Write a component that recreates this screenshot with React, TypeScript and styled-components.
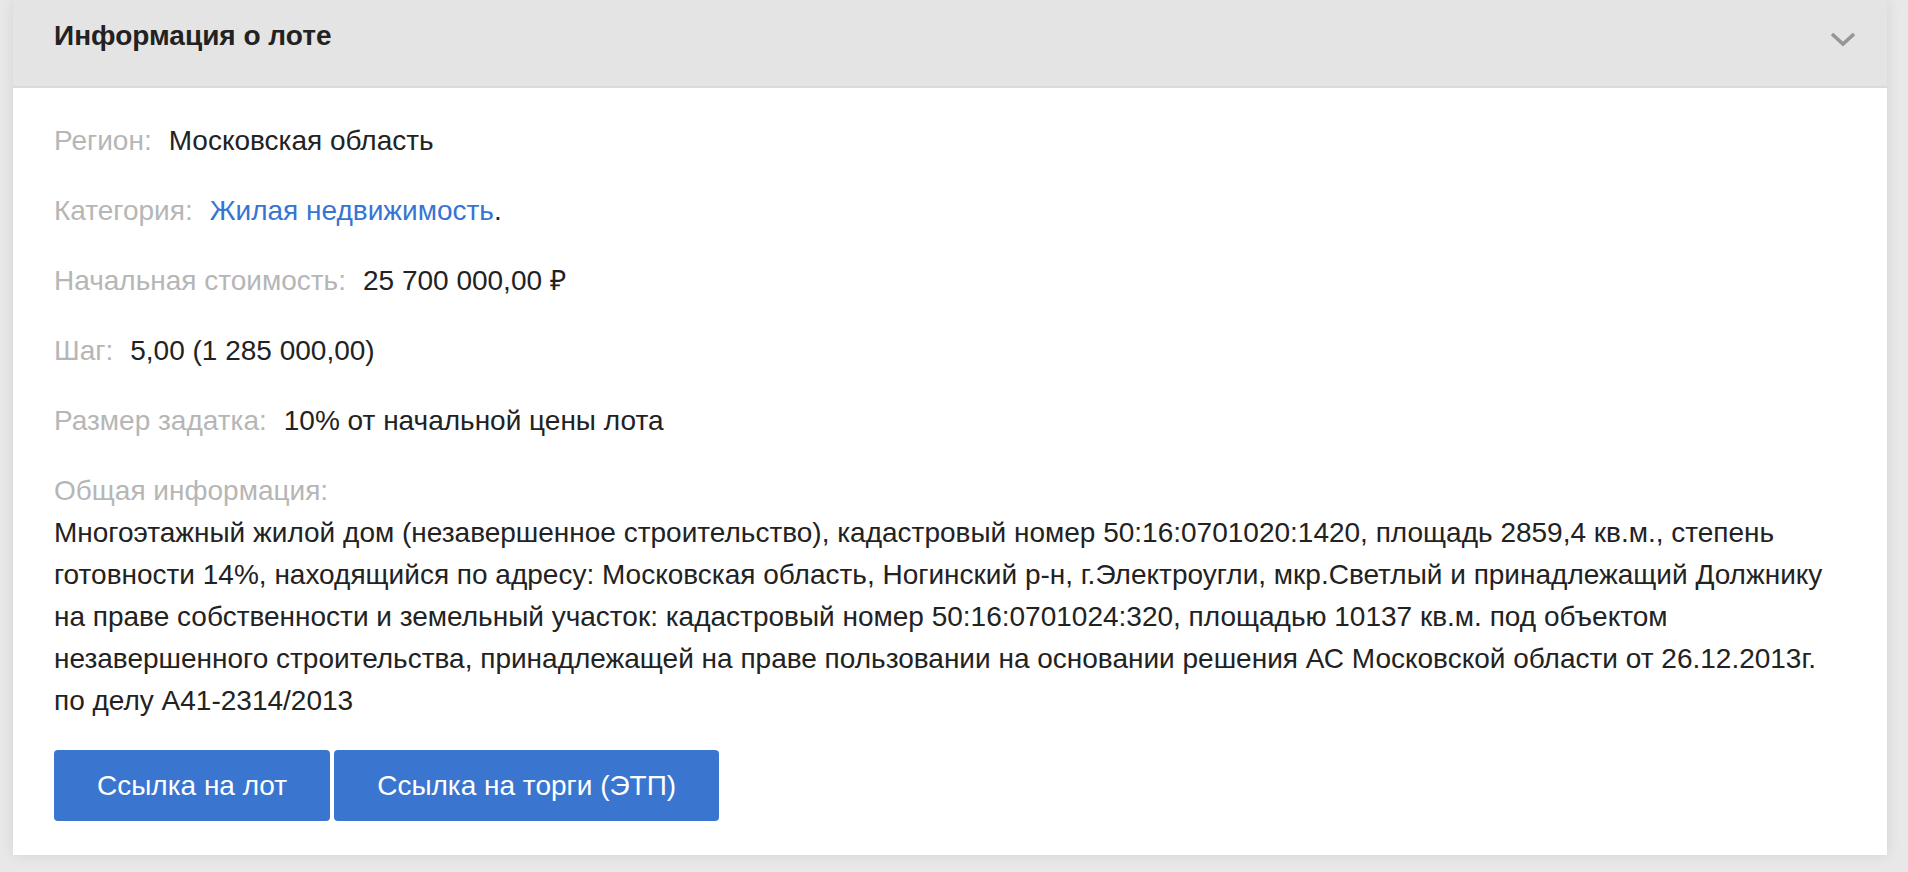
import styled, { createGlobalStyle } from "styled-components";

const GlobalStyle = createGlobalStyle`
  html, body {
    margin: 0;
    padding: 0;
    background: #e8e8e8;
  }
  body {
    font-family: "Liberation Sans", Arial, Helvetica, sans-serif;
  }
`;

const rows = [
  { label: "Регион:", value: "Московская область" },
  { label: "Категория:", value: "Жилая недвижимость", link: true },
  { label: "Начальная стоимость:", value: "25 700 000,00 ₽" },
  { label: "Шаг:", value: "5,00 (1 285 000,00)" },
  { label: "Размер задатка:", value: "10% от начальной цены лота" },
];

const description =
  "Многоэтажный жилой дом (незавершенное строительство), кадастровый номер 50:16:0701020:1420, площадь 2859,4 кв.м., степень готовности 14%, находящийся по адресу: Московская область, Ногинский р-н, г.Электроугли, мкр.Светлый и принадлежащий Должнику на праве собственности и земельный участок: кадастровый номер 50:16:0701024:320, площадью 10137 кв.м. под объектом незавершенного строительства, принадлежащей на праве пользовании на основании решения АС Московской области от 26.12.2013г. по делу А41-2314/2013";

const LotInfo = () => {
  return (
    <Page>
      <GlobalStyle />
      <Card>
        <Header>
          <Title>Информация о лоте</Title>
          <Chevron width="28" height="18" viewBox="0 0 28 18">
            <polyline points="3,4 14,14 25,4" fill="none" stroke="#969696" strokeWidth="3.6" />
          </Chevron>
        </Header>
        <Body>
          {rows.map((row) => (
            <Row key={row.label}>
              <Label>{row.label}</Label>
              {row.link ? (
                <>
                  <Link href="#">{row.value}</Link>.
                </>
              ) : (
                row.value
              )}
            </Row>
          ))}
          <Row>
            <Label $block>Общая информация:</Label>
            {description}
          </Row>
          <Actions>
            <ActionButton>Ссылка на лот</ActionButton>
            <ActionButton>Ссылка на торги (ЭТП)</ActionButton>
          </Actions>
        </Body>
      </Card>
    </Page>
  );
};

const Page = styled.div`
  min-height: 872px;
  box-sizing: border-box;
  padding: 0 21px 0 13px;
`;

const Card = styled.section`
  background-color: #ffffff;
  box-shadow: 0 0 14px 0 rgba(0, 0, 0, 0.09);
`;

const Header = styled.div`
  height: 88px;
  box-sizing: border-box;
  background-color: #e4e4e4;
  border-bottom: 2px solid #dadada;
  display: flex;
  align-items: center;
  justify-content: space-between;
  padding: 0 30px 14px 41px;
`;

const Title = styled.h2`
  margin: 0;
  font-size: 28px;
  font-weight: 700;
  color: #222222;
`;

const Chevron = styled.svg`
  margin-top: 6px;
  display: block;
`;

const Body = styled.div`
  padding: 32px 38px 34px 41px;
`;

const Row = styled.div`
  font-size: 28px;
  line-height: 42px;
  color: #222222;
  margin-bottom: 28px;

  &:last-of-type {
    margin-bottom: 0;
  }
`;

const Label = styled.span<{ $block?: boolean }>`
  display: ${(p) => (p.$block ? "block" : "inline")};
  color: #b6b6b6;
  margin-right: 17px;
`;

const Link = styled.a`
  color: #3674d3;
  text-decoration: none;
`;

const Actions = styled.div`
  display: flex;
  gap: 4px;
  margin-top: 28px;
`;

const ActionButton = styled.button`
  height: 71px;
  padding: 0 43px;
  border: none;
  border-radius: 4px;
  background-color: #3a76cf;
  color: #ffffff;
  font-family: "Liberation Sans", Arial, Helvetica, sans-serif;
  font-size: 28px;
  cursor: pointer;
`;

export default LotInfo;
